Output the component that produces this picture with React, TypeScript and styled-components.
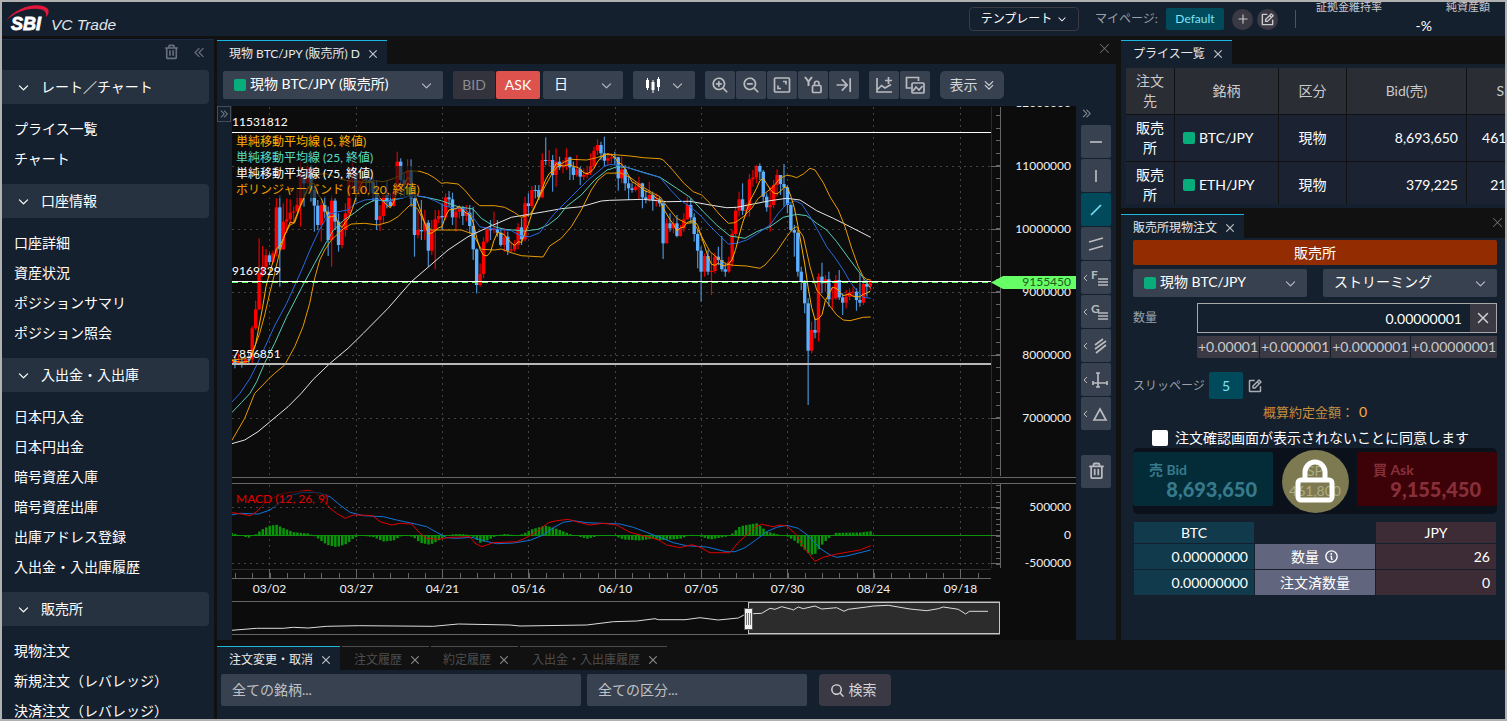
import React from "react";
import styled, { createGlobalStyle, css } from "styled-components";
import {
  PiTrashBold,
  PiCaretDoubleLeftBold,
  PiCaretDoubleRightBold,
  PiCaretDoubleDownBold,
  PiCaretDownBold,
  PiXBold,
  PiXLight,
  PiPlusBold,
  PiNotePencilBold,
  PiMagnifyingGlassPlusBold,
  PiMagnifyingGlassMinusBold,
  PiMagnifyingGlassBold,
  PiArrowLineRightBold,
  PiInfoBold,
} from "react-icons/pi";

const color = {
  navy: "#15202f",
  black: "#111111",
  chart: "#0c0c0c",
  control: "#38414f",
  brown: "#3a3944",
  teal: "#004a5c",
  tealText: "#7fe3f5",
  accent: "#1cb5e0",
  green: "#07ae7b",
  text: "#ffffff",
  soft: "#c9cacc",
  dim: "#9aa0a8",
};

const GlobalStyle = createGlobalStyle`
  * { box-sizing: border-box; }
  body {
    margin: 0;
    background: ${color.black};
    color: ${color.text};
    font-family: Lato, "Noto Sans CJK JP", sans-serif;
    font-size: 14px;
    line-height: 20px;
  }
  button, input, select { font: inherit; color: inherit; margin: 0; }
  button { border: 0; padding: 0; background: none; }
  svg { flex: none; }
`;

/* ---------- page frame ---------- */

const Frame = styled.div`
  display: flex;
  flex-direction: column;
  height: 100vh;
  border: 2px solid #b1b1b1;
  overflow: hidden;
`;

const Header = styled.header`
  display: flex;
  align-items: center;
  flex: none;
  height: 34px;
  background: ${color.navy};
  overflow: hidden;
`;

const Body = styled.div`
  display: flex;
  flex: 1;
  min-height: 0;
  gap: 3px;
  padding-top: 3px;
`;

const Workspace = styled.main`
  display: flex;
  flex-direction: column;
  flex: 1;
  min-width: 0;
  gap: 6px;
  padding-top: 1px;
`;

const UpperRow = styled.div`
  display: flex;
  flex: none;
  gap: 5px;
`;

/* ---------- header ---------- */

const HeaderTools = styled.div`
  display: flex;
  align-items: center;
  margin-left: auto;
`;

const TemplateButton = styled.button`
  display: flex;
  align-items: center;
  justify-content: center;
  gap: 5px;
  width: 110px;
  height: 24px;
  margin-right: 16px;
  border: 1px solid #3b3a42;
  border-radius: 4px;
  font-size: 12px;
`;

const HeaderLabel = styled.span`
  width: 71px;
  color: ${color.dim};
  font-size: 12px;
`;

const PageChip = styled.button`
  width: 58px;
  height: 22px;
  margin-right: 8px;
  border-radius: 2px;
  background: ${color.teal};
  color: ${color.tealText};
  font-size: 12px;
`;

const RoundButton = styled.button`
  display: grid;
  place-items: center;
  width: 21px;
  height: 21px;
  margin-right: 4px;
  border-radius: 50%;
  background: ${color.brown};
  color: ${color.soft};
`;

const Divider = styled.span`
  width: 1px;
  height: 18px;
  margin: 0 20px 0 13px;
  background: #4a5563;
`;

const Metric = styled.div<{ $width: number; $inset?: number }>`
  display: flex;
  flex-direction: column;
  width: ${(p) => p.$width}px;
  height: 40px;
  padding-left: ${(p) => p.$inset ?? 0}px;
  color: ${color.soft};
  font-size: 11px;
  line-height: 16px;
`;

const MetricValue = styled.span`
  align-self: flex-end;
  padding-top: 1px;
  color: ${color.text};
  font-size: 14px;
  line-height: 20px;
`;

/* ---------- sidebar ---------- */

const Sidebar = styled.nav`
  width: 212px;
  flex: none;
  background: ${color.navy};
  border-top: 1px solid #1c2a4a;
  overflow: hidden;
`;

const SidebarTools = styled.div`
  display: flex;
  justify-content: flex-end;
  align-items: center;
  gap: 13px;
  height: 30px;
  padding: 0 8px 6px 0;
  color: #69707b;
  button { display: flex; }
`;

const GroupHead = styled.button`
  display: flex;
  align-items: center;
  gap: 11px;
  width: 207px;
  height: 34px;
  padding-left: 15px;
  border-radius: 0 4px 4px 0;
  background: #263240;
`;

const GroupList = styled.ul`
  margin: 0;
  padding: 10px 12px;
  list-style: none;
`;

const GroupLink = styled.a`
  display: block;
  color: inherit;
  line-height: 30px;
  text-decoration: none;
  white-space: nowrap;
`;

/* ---------- panels and tabs ---------- */

const Panel = styled.section<{ $grow?: boolean }>`
  display: flex;
  flex-direction: column;
  min-width: 0;
  ${(p) => p.$grow && css`flex: 1;`}
`;

const RightColumn = styled.div`
  display: flex;
  flex-direction: column;
  flex: none;
  gap: 6px;
  width: 384px;
`;

const TabBar = styled.div`
  display: flex;
  flex: none;
  gap: 2px;
  height: 24px;
  background: ${color.black};
`;

const Tab = styled.div<{ $active?: boolean }>`
  display: flex;
  align-items: center;
  gap: 7px;
  padding: 2px 8px 0 12px;
  border-top: 1px solid ${(p) => (p.$active ? color.accent : "#4c4c4c")};
  background: ${(p) => (p.$active ? color.navy : "transparent")};
  color: ${(p) => (p.$active ? "#e8e8e8" : "#4e4e4e")};
  font-size: 12px;
  white-space: nowrap;
  button { display: flex; color: ${(p) => (p.$active ? "#c0c4c9" : "#8a8a8a")}; }
`;

const PanelClose = styled.button<{ $inset?: number }>`
  display: flex;
  align-items: flex-start;
  margin: 1px ${(p) => p.$inset ?? 4}px 0 auto;
  color: #7b7b7b;
`;

const NavyBody = styled.div<{ $pad: string }>`
  display: flex;
  flex-direction: column;
  flex: 1;
  padding: ${(p) => p.$pad};
  background: ${color.navy};
`;

/* ---------- controls ---------- */

const SelectBox = styled.label<{ $width: number }>`
  display: flex;
  align-items: center;
  width: ${(p) => p.$width}px;
  height: 28px;
  padding: 0 10px 0 11px;
  border-radius: 2px;
  background: ${color.control};
  select {
    flex: 1;
    min-width: 0;
    padding: 0 0 2px;
    border: 0;
    outline: 0;
    background: transparent;
    appearance: none;
  }
  svg { color: #b4b8be; }
`;

const Square = styled.i`
  flex: none;
  width: 12px;
  height: 12px;
  margin-right: 4px;
  border-radius: 2px;
  background: ${color.green};
`;

const Toolbar = styled.div`
  display: flex;
  gap: 10px;
  height: 42px;
  padding: 7px 6px;
  background: ${color.navy};
`;

const ButtonGroup = styled.div<{ $gap?: number }>`
  display: flex;
  gap: ${(p) => p.$gap ?? 1}px;
`;

const SideButton = styled.button<{ $ask?: boolean }>`
  width: ${(p) => (p.$ask ? 44 : 42)}px;
  height: 28px;
  border-radius: 2px;
  background: ${(p) => (p.$ask ? "#dd524c" : "#33333e")};
  color: ${(p) => (p.$ask ? "#fff" : "#8b8b92")};
`;

const ToolButton = styled.button<{ $width?: number }>`
  display: flex;
  align-items: center;
  justify-content: center;
  gap: 10px;
  width: ${(p) => p.$width ?? 30}px;
  height: 28px;
  border-radius: 2px;
  background: ${color.control};
  color: #b9bbbf;
`;

const ShowButton = styled(ToolButton)`
  gap: 5px;
  border-radius: 5px;
  color: #d4d5d8;
`;

const ChartArea = styled.div`
  display: flex;
  background: ${color.navy};
`;

const HandleColumn = styled.div`
  width: 15px;
  flex: none;
`;

const Handle = styled.button`
  display: grid;
  place-items: center;
  width: 14px;
  height: 16px;
  border: 1px solid #444c58;
  color: #7b828c;
`;

const ChartSvg = styled.svg`
  display: block;
  flex: 1;
  min-width: 0;
  height: 534px;
  background: ${color.chart};
  text {
    font-family: Lato, "Noto Sans CJK JP", sans-serif;
    font-size: 12px;
  }
`;

const DrawColumn = styled.div`
  display: flex;
  flex-direction: column;
  gap: 1px;
  flex: none;
  width: 40px;
  padding: 2px 5px 0;
`;

const DrawToggle = styled.button`
  display: flex;
  height: 16px;
  color: #8b9098;
`;

const DrawButton = styled.button<{ $active?: boolean; $apart?: boolean }>`
  display: grid;
  place-items: center;
  width: 30px;
  height: 33px;
  margin-top: ${(p) => (p.$apart ? 24 : 0)}px;
  border-radius: 2px;
  background: ${(p) => (p.$active ? color.teal : color.control)};
  color: ${(p) => (p.$active ? "#6fe0f5" : "#b9bbbf")};
`;

/* ---------- price list ---------- */

const PriceClip = styled.div`
  height: 136px;
  overflow: hidden;
`;

const PriceTable = styled.table`
  width: 417px;
  table-layout: fixed;
  border-collapse: separate;
  border-spacing: 0;
  th, td {
    height: 47px;
    padding: 0 8px;
    border: solid ${color.black};
    border-width: 0 1px 1px 0;
    line-height: 20px;
    font-weight: 400;
    text-align: center;
  }
  th { background: #2a2d34; color: ${color.soft}; }
  td { background: #1b2333; }
  td:nth-child(n + 4) { text-align: right; }
  td:nth-child(2) { text-align: left; }
`;

const Pair = styled.span`
  display: flex;
  align-items: center;
`;

/* ---------- order form ---------- */

const VenueButton = styled.button`
  height: 25px;
  margin-bottom: 4px;
  border-radius: 2px;
  background: #932c00;
`;

const Row = styled.div<{ $top?: number }>`
  display: flex;
  align-items: center;
  justify-content: space-between;
  margin-top: ${(p) => p.$top ?? 0}px;
`;

const FieldLabel = styled.label<{ $width: number }>`
  width: ${(p) => p.$width}px;
  color: ${color.dim};
  font-size: 12px;
`;

const AmountBox = styled.div`
  display: flex;
  width: 300px;
  height: 30px;
  border: 1px solid #a8a8a8;
  input {
    flex: 1;
    min-width: 0;
    padding: 2px 8px 0;
    border: 0;
    outline: 0;
    background: transparent;
    text-align: right;
  }
  button {
    display: grid;
    place-items: center;
    width: 26px;
    background: ${color.brown};
    color: #d0d0d4;
  }
`;

const StepRow = styled.div`
  display: flex;
  gap: 1px;
  margin: 3px 0 0 64px;
`;

const StepButton = styled.button`
  flex: 1 1 auto;
  height: 22px;
  background: ${color.brown};
  color: ${color.soft};
  border-radius: 1px;
`;

const SlipRow = styled.div`
  display: flex;
  align-items: center;
  margin-top: 14px;
  color: #a9adb3;
  button { display: flex; margin-left: 4px; }
`;

const SlipChip = styled.button`
  justify-content: center;
  align-items: center;
  width: 34px;
  height: 27px;
  border-radius: 2px;
  background: ${color.teal};
  color: ${color.tealText};
`;

const Estimate = styled.p`
  display: flex;
  justify-content: center;
  margin: 3px 0 0;
  color: #c48b3c;
  font-size: 13px;
  b { margin-left: 5px; color: #ffab40; font-weight: 400; font-size: 14px; }
`;

const Consent = styled.label`
  display: flex;
  align-items: center;
  gap: 7px;
  height: 20px;
  margin-top: 6px;
  padding-left: 19px;
  white-space: nowrap;
  input {
    width: 16px;
    height: 16px;
    margin: 0;
    border-radius: 2px;
    background: #fff;
    appearance: none;
  }
`;

const Deal = styled.div`
  display: flex;
  align-items: center;
  justify-content: space-between;
  height: 66px;
  padding-bottom: 4px;
  border-radius: 5px;
  background: #0a111b;
`;

const DealButton = styled.button<{ $ask?: boolean }>`
  display: flex;
  flex-direction: column;
  width: 140px;
  height: 54px;
  padding: 10px 16px 0;
  border-radius: 2px;
  background: ${(p) => (p.$ask ? "#3d0208" : "#032c38")};
  color: ${(p) => (p.$ask ? "#87303a" : "#367a8c")};
  font-weight: 700;
  line-height: 16px;
  span { align-self: flex-start; }
  b { align-self: flex-end; font-size: 20px; line-height: 22px; }
`;

const Spread = styled.div`
  display: grid;
  width: 67px;
  height: 63px;
  margin-top: 4px;
  place-items: center;
  border-radius: 50%;
  background: #7d7a51;
  color: #aeab83;
  > * { grid-area: 1 / 1; }
`;

const SpreadText = styled.span`
  display: flex;
  flex-direction: column;
  align-items: center;
`;

const Balance = styled.table`
  width: 100%;
  margin-top: 7px;
  table-layout: fixed;
  border-spacing: 1px;
  th, td { height: 25px; padding: 0 6px; text-align: right; font-weight: 400; line-height: 20px; }
  thead th, thead td { height: 21px; text-align: center; }
  th:first-child, td:first-child { background: #123a4d; }
  th:last-child, td:last-child { background: #3d2b36; }
  tbody th:nth-child(2) { background: #61657d; text-align: center; }
`;

const Inline = styled.span`
  display: flex;
  align-items: center;
  justify-content: center;
  gap: 5px;
`;

/* ---------- order search ---------- */

const SearchRow = styled.div`
  display: flex;
  gap: 6px;
`;

const SearchInput = styled.input<{ $width: number }>`
  width: ${(p) => p.$width}px;
  height: 32px;
  padding: 0 11px 2px;
  border: 0;
  border-radius: 2px;
  background: ${color.control};
  &::placeholder { color: #c0c1c4; opacity: 1; }
`;

const SearchButton = styled.button`
  display: flex;
  align-items: center;
  justify-content: center;
  gap: 4px;
  width: 72px;
  height: 32px;
  margin-left: 6px;
  padding-right: 4px;
  border-radius: 4px;
  background: ${color.brown};
  color: #d4d4d8;
`;

/* ---------- chart data ---------- */

// A curve is stored in segments; each has its own origin and uses three units to the pixel.
type Segment = { x: number; y: number; pts: string };

const toPoints = (segs: Segment[]) =>
  segs.flatMap((s) =>
    s.pts.split(" ").map((p) => {
      const [a, b] = p.split(",").map(Number);
      return [s.x + a / 3, s.y + b / 3] as const;
    })
  );

const toPath = (segs: Segment[]) =>
  toPoints(segs)
    .map(([x, y]) => `${x.toFixed(1)},${y.toFixed(1)}`)
    .join(" ");

const price = (early: string, late: string): Segment[] => [
  { x: 228, y: 130, pts: early },
  { x: 610, y: 100, pts: late },
];

const study = (early: string, late: string): Segment[] => [
  { x: 220, y: 475, pts: early },
  { x: 660, y: 400, pts: late },
];

const upperBand = price(
  "11,690 50,686 65,680 80,650 95,610 110,555 125,490 140,430 155,365 170,315 186,285 200,278 215,235 230,200 245,165 265,135 290,130 320,140 350,150 380,155 420,158 440,152 465,155 500,145 530,127 550,123 575,124 600,132 620,144 640,160 655,158 690,162 710,180 735,210 755,227 800,227 830,232 860,248 880,262 906,254 925,220 945,180 975,125 990,108 1010,95 1030,88 1076,90 1106,83 1136,73 1146,75",
  "0,163 60,168 100,173 150,176 160,180 190,212 220,248 250,275 275,285 300,310 330,345 355,370 375,368 400,350 425,325 445,295 465,280 490,260 510,235 530,226 545,228 560,233 580,222 600,205 615,210 640,248 660,290 685,330 705,380 725,445 745,500 760,530 770,538 782,540"
);
const lowerBand = price(
  "11,932 50,865 80,790 90,780 124,745 140,730 170,705 200,650 225,590 245,520 260,445 275,390 290,360 310,330 345,297 370,282 410,280 450,285 485,275 510,260 530,240 550,222 570,238 590,280 610,300 640,300 700,300 735,312 760,358 800,360 820,357 850,368 880,377 945,381 965,348 1000,325 1030,290 1060,240 1090,180 1110,150 1135,130 1145,129",
  "0,220 30,218 60,232 100,262 130,280 150,290 170,318 200,355 230,370 250,368 270,400 300,455 330,480 350,492 370,496 410,498 450,505 465,495 500,455 530,410 550,385 560,380 580,410 600,500 620,570 650,605 680,645 700,660 720,662 760,652 782,651"
);
const basis = price(
  "11,817 36,790 66,745 86,705 141,585 176,520 221,420 246,360 274,300 290,272 305,252 330,245 360,240 380,222 410,210 440,207 470,215 520,205 550,197 590,200 620,212 650,228 680,235 710,235 735,262 755,290 780,295 850,302 880,318 905,320 935,308 960,275 980,250 1030,200 1080,150 1110,125 1130,108 1145,104",
  "0,193 25,196 60,205 100,218 150,232 180,268 210,300 240,320 270,345 300,378 330,408 355,432 380,430 410,420 440,402 480,375 505,340 530,312 555,302 575,312 600,350 620,385 650,440 680,480 700,510 720,545 740,572 760,592 782,595"
);
const average25 = price(
  "11,848 40,818 66,790 86,755 111,697 140,640 176,560 220,475 260,400 290,345 315,302 345,272 380,248 410,225 440,210 480,212 520,205 550,195 600,203 640,212 690,230 735,237 760,265 800,290 830,298 890,303 930,298 960,285 990,262 1015,230 1060,195 1100,150 1140,118",
  "0,208 20,200 50,202 100,217 150,232 200,265 240,292 280,335 320,375 360,408 405,415 440,395 480,380 520,352 560,343 590,347 620,370 650,390 680,425 720,480 750,520 775,555 782,565"
);
const average75 = price(
  "11,941 50,930 90,905 124,877 180,830 220,790 256,748 306,700 360,655 406,610 480,535 550,455 600,412 660,360 720,320 780,292 850,262 950,245 1000,236 1060,230 1120,213 1145,211",
  "0,301 100,298 170,305 240,304 300,315 350,323 380,322 430,312 480,302 530,295 570,300 620,332 670,355 710,375 782,412"
);
const macdLine = study(
  "35,113 70,118 90,122 110,110 130,88 155,70 190,55 230,50 265,46 285,52 310,75 330,100 350,115 375,130 400,120 440,121 460,123 480,140 515,150 540,145 575,147 600,175 620,190 655,193 690,187 750,185 765,205 785,215 820,203 890,200 915,190 950,170 985,143 1010,137 1045,133 1080,143 1110,150 1150,145 1190,150 1230,172 1260,180 1300,190",
  "0,422 20,435 60,443 95,434 120,442 150,458 210,458 235,427 260,405 285,380 305,373 340,380 360,375 380,378 410,405 430,440 465,484 490,472 530,462 570,455 600,450 632,437"
);
const signalLine = study(
  "35,120 60,115 115,117 150,105 175,85 215,60 250,52 295,53 330,65 360,90 390,112 430,122 490,125 530,135 590,148 620,155 650,172 680,188 710,190 755,187 790,197 830,206 880,204 930,196 970,180 1000,158 1030,142 1060,137 1100,143 1200,147 1240,157 1280,172 1310,184",
  "0,412 40,428 80,437 140,441 200,455 225,455 255,443 290,418 320,395 350,382 380,376 415,385 445,407 480,445 510,465 530,472 560,468 600,458 632,450"
);
const overview = study(
  "35,466 110,460 190,460 220,457 265,459 320,454 415,452 640,454 715,447 870,450 900,453 1100,450 1180,440 1250,438 1305,431 1315,434",
  "0,659 75,659 120,653 175,660 235,654 250,646 265,643 280,641 305,640 330,625 345,628 365,620 395,628 400,630 415,621 430,626 465,618 485,627 530,623 552,634 565,628 620,621 640,618 685,616 750,627 800,632 835,626 850,621 895,628 917,642 928,634 984,634"
);

// Daily bars as close,high,low; a bar opens where the one before it closed.
const barsEarly =
  "690,650,700 700,680,715 695,670,705 703,685,713 688,675,706 688,670,700 595,588,700 538,512,600 430,325,540 410,348,440 376,357,415 396,370,405 370,362,400 232,205,380 358,195,470 275,220,360 268,205,310 248,208,285 245,230,280 225,180,240 130,95,290 160,120,230 110,95,170 180,105,215 227,170,305 285,210,300 225,215,335 245,200,265 330,230,378 212,195,410 275,205,300 345,250,365 300,275,355 250,220,320 150,120,260 135,90,170 185,110,215 150,120,200 140,115,190 150,110,180 155,120,190 190,140,215 270,150,300 258,225,303 195,190,280 215,150,235 228,190,230 185,170,230 95,65,190 150,85,200 165,130,200 120,88,190 205,88,230 315,180,380 300,240,325 304,210,330 278,240,330 362,270,410 300,270,375 268,240,418 258,240,280 262,220,300 202,190,270 208,183,230 262,188,285 245,235,305 232,225,265 258,228,285 248,225,275 288,225,310 358,230,390 465,355,490 432,400,470 335,322,445 298,290,340 300,270,330 297,245,310 308,270,320 345,295,350 320,295,365 362,305,375 358,340,370 345,330,365 292,280,358 328,265,345 220,200,335 228,190,260 180,168,235 180,165,205 202,165,210 90,70,205 92,22,105 90,60,110 135,75,185 95,55,170 112,80,120 108,90,130 82,55,120 112,80,150 135,95,150 118,75,140 140,110,165 135,115,150 128,110,145 108,70,135 62,50,115 45,28,75 70,35,90 92,20,110 85,70,105 82,70,100";
const barsLate =
  "172,155,195 235,170,272 208,170,250 250,195,272 265,230,300 270,250,278 260,245,275 250,230,300 292,248,325 298,270,310 285,245,305 300,275,332 298,280,320 310,290,320 430,305,477 370,355,430 385,340,395 370,355,400 408,345,412 385,375,410 358,340,395 315,290,360 352,295,370 402,340,425 452,390,505 515,440,605 468,460,530 515,450,525 513,460,585 470,458,520 480,440,495 508,408,515 515,490,530 485,470,518 402,390,500 332,320,410 298,275,350 332,250,345 330,310,350 238,222,350 232,210,260 198,195,250 215,190,240 290,210,305 322,280,335 315,260,395 255,240,325 225,208,290 252,225,285 262,192,320 315,255,340 390,310,395 398,375,470 515,390,530 545,500,570 610,540,640 752,595,915 690,665,760 698,655,715 530,520,725 550,488,580 538,525,575 598,515,620 595,560,630 540,525,600 592,510,600 608,580,645 590,570,625 578,565,600 575,560,590 600,565,632 608,520,620 552,530,615 560,540,590 545,540,570";

const readBars = (text: string, top: number) =>
  text.split(" ").map((b) => b.split(",").map((v) => top + Number(v) / 3));

const bars = [...readBars(barsEarly, 130), ...readBars(barsLate, 100)];
const barX = (i: number) => 231.5 + i * 3.453;

const average5 = bars
  .map((_, i) => {
    const part = bars.slice(Math.max(0, i - 4), i + 1);
    const mean = part.reduce((s, b) => s + b[0], 0) / part.length;
    return `${barX(i).toFixed(1)},${mean.toFixed(1)}`;
  })
  .join(" ");

const histogramKnots = toPoints(
  study(
    "35,8 60,0 85,-7 105,2 125,18 150,30 170,32 190,22 220,10 265,6 285,-3 320,-28 350,-35 380,-25 400,-8 420,0 460,-5 490,-18 520,-15 540,-3 560,0 580,-5 600,-22 630,-28 655,-15 680,0 700,4 730,4 755,0 780,-22 800,-15 830,0 855,5 890,0 910,5 930,17 975,30 1010,20 1050,4 1065,0 1100,-10 1140,0 1180,0 1210,-12 1260,-15 1300,-9",
    "0,-14 60,-10 95,3 120,-3 150,-12 200,-3 215,5 240,28 290,37 320,12 350,4 380,-2 410,-20 450,-58 465,-55 490,-22 515,0 525,8 600,9 632,13"
  )
).map(([x, y]) => [x, x < 658 ? y - 475 : y - 400]);

const histogramAt = (x: number) => {
  const j = histogramKnots.findIndex((k) => k[0] >= x);
  if (j <= 0) return histogramKnots[j === 0 ? 0 : histogramKnots.length - 1][1];
  const [x0, y0] = histogramKnots[j - 1];
  const [x1, y1] = histogramKnots[j];
  return y0 + ((y1 - y0) * (x - x0)) / (x1 - x0);
};

const dates: [number, string][] = [
  [269.5, "03/02"],
  [356.5, "03/27"],
  [442.5, "04/21"],
  [528.5, "05/16"],
  [615.5, "06/10"],
  [701.5, "07/05"],
  [787.5, "07/30"],
  [873.5, "08/24"],
  [960.5, "09/18"],
];

const priceMarks: [number, string][] = [
  [103.5, "12000000"],
  [166.5, "11000000"],
  [229.5, "10000000"],
  [292.5, "9000000"],
  [355.5, "8000000"],
  [418.5, "7000000"],
];

const macdMarks: [number, string][] = [
  [507.5, "500000"],
  [535.5, "0"],
  [563.5, "-500000"],
];

const legend = [
  { y: 142, width: 130, fill: "#ffb000", text: "単純移動平均線 (5, 終値)" },
  { y: 158, width: 137, fill: "#57dcc4", text: "単純移動平均線 (25, 終値)" },
  { y: 174, width: 182, fill: "#ffffff", text: "単純移動平均線 (75, 終値)" },
  { y: 190, width: 182, fill: "#f09c00", text: "ボリンジャーバンド (1.0, 20, 終値)" },
];

const range = (from: number, to: number, step: number) => {
  const out: number[] = [];
  for (let v = from; v <= to; v += step) out.push(v);
  return out;
};

const Line = ({ points, stroke, width = 1 }: { points: string; stroke: string; width?: number }) => (
  <polyline points={points} fill="none" stroke={stroke} strokeWidth={width} strokeLinejoin="round" />
);

const Chart = () => (
  <ChartSvg viewBox="232 106 844 534" preserveAspectRatio="xMinYMin meet" role="img" aria-label="BTC/JPY">
    <g stroke="#444" strokeDasharray="2 4">
      {dates.map(([x]) => (
        <path key={x} d={`M${x} 107V476M${x} 485V568`} />
      ))}
      {priceMarks.slice(1).map(([y]) => (
        <path key={y} d={`M232 ${y}H991`} />
      ))}
      <path d="M232 507.5H991M232 563.5H991" />
    </g>

    {bars.map(([close, high, low], i) => {
      const open = i ? bars[i - 1][0] : close + 3;
      const up = close < open;
      const x = barX(i);
      return (
        <g key={i}>
          <rect x={x - 0.6} y={high} width={1.2} height={low - high} fill={up ? "#e00000" : "#4a90d0"} />
          <rect
            x={x - 1.7}
            y={Math.min(open, close)}
            width={3.4}
            height={Math.max(1, Math.abs(open - close))}
            fill={up ? "#ff0000" : "#5cb0ff"}
          />
        </g>
      );
    })}

    <Line points={toPath(average75)} stroke="#e6e6e6" />
    <Line points={toPath(average25)} stroke="#57cdb4" />
    <Line points={toPath(basis)} stroke="#2a68e0" />
    <Line points={toPath(upperBand)} stroke="#e89a00" />
    <Line points={toPath(lowerBand)} stroke="#e89a00" />
    <Line points={average5} stroke="#ffb000" />

    <path d="M232 132.5H991M232 281.5H991" stroke="#fff" />
    <path d="M232 282.5H991" stroke="#66ff66" strokeDasharray="6 4" />
    <path d="M232 364H991" stroke="#b8b8b8" strokeWidth="2" />

    {legend.map((l) => (
      <g key={l.y}>
        <rect x={236} y={l.y - 8} width={l.width} height={16} fill={color.chart} fillOpacity={0.65} />
        <text x={236} y={l.y + 4} fill={l.fill}>{l.text}</text>
      </g>
    ))}
    <g fill="#fff">
      <text x={232} y={126}>11531812</text>
      <text x={232} y={275}>9169329</text>
      <text x={232} y={358}>7856851</text>
    </g>

    {bars.map((_, i) => {
      const x = barX(i);
      const h = histogramAt(x);
      return (
        <rect key={i} x={x - 1} y={535.5 - Math.max(h, 0)} width={2.5} height={Math.abs(h)} fill="#0a940a" />
      );
    })}
    <path d="M232 535.5H991" stroke="#0a940a" />
    <Line points={toPath(signalLine)} stroke="#0f74d8" />
    <Line points={toPath(macdLine)} stroke="#e00000" />
    <rect x={236} y={491} width={92} height={16} fill={color.chart} fillOpacity={0.6} />
    <text x={236} y={503} fill="#e00000">MACD (12, 26, 9)</text>

    <g stroke="#666">
      <path d="M232 477.5H1076M232 483.5H1076" />
      <path d="M1000.5 107V476M1000.5 484V568" />
      <path d="M232 578.5H991M232 601.5H1000M232 634.5H1000" />
      <path d="M991.5 107V568M232 569.5H991" stroke="#2b2b2b" />
      {range(115.9, 475, 12.6).map((y) => (
        <path key={y} d={`M996 ${Math.round(y) - 0.5}H1000`} />
      ))}
      {range(485.1, 567, 5.6).map((y) => (
        <path key={y} d={`M996 ${Math.round(y) + 0.5}H1000`} />
      ))}
      {[...priceMarks.slice(1), ...macdMarks].map(([y]) => (
        <path key={y} d={`M991 ${y}H1000`} />
      ))}
      {range(235, 980, 17.27).map((x) => (
        <path key={x} d={`M${Math.round(x) + 0.5} 573V578`} />
      ))}
      {dates.map(([x]) => (
        <path key={x} d={`M${x} 569V578`} />
      ))}
    </g>

    <g fill="#f0f0f0" textAnchor="end">
      {[...priceMarks, ...macdMarks].map(([y, t]) => (
        <text key={t} x={1071} y={y + 3}>{t}</text>
      ))}
    </g>
    <g fill="#f0f0f0" textAnchor="middle">
      {dates.map(([x, t]) => (
        <text key={t} x={x} y={593}>{t}</text>
      ))}
    </g>
    <polygon points="991,282.5 1003,276 1076,276 1076,289 1003,289" fill="#66ff66" />
    <text x={1071} y={286} fill="#1f5a1f" textAnchor="end">9155450</text>

    <rect x={748.5} y={602.5} width={251} height={31} fill="#2c2c2c" stroke="#c4c4c4" />
    <Line points={toPath(overview)} stroke="#dcdcdc" />
    <rect x={744.5} y={608.5} width={8} height={21} fill="#f2f2f2" stroke="#555" />
    <path d="M746.5 613V625M748.5 613V625M750.5 613V625" stroke="#777" />
  </ChartSvg>
);

/* ---------- icons drawn for this terminal ---------- */

const Glyph = ({ size = 20, children }: { size?: number; children: React.ReactNode }) => (
  <svg width={size} height={size} viewBox="0 0 20 20" fill="none" stroke="currentColor" strokeWidth="1.7">
    {children}
  </svg>
);

const CandleGlyph = () => (
  <svg width="16" height="18" viewBox="0 0 16 18" stroke="#fff" strokeWidth="3">
    <path d="M2.5 4V12M8 6V14M13.5 3V11" />
    <path d="M2.5 2V14M8 4V17M13.5 1V15" strokeWidth="1" />
  </svg>
);

const FitGlyph = () => (
  <Glyph>
    <rect x="2.5" y="3" width="15" height="14" rx="1" />
    <path d="M11 6.500H14V9.500M9 13.500H6V10.500" />
  </Glyph>
);

const YLockGlyph = () => (
  <Glyph>
    <path d="M2 2L5.500 6.500L9 2M5.500 6.500V11" strokeWidth="2" />
    <rect x="9.500" y="10.500" width="8.500" height="7" rx="1" />
    <path d="M11.500 10.500V8.500a2.250 2.250 0 0 1 4.500 0V10.500" />
  </Glyph>
);

const AddIndicatorGlyph = () => (
  <Glyph>
    <path d="M3 3V17H18M3.500 14.500L7.500 10.500L11 13L17 9.500M11 5.500H18M14.500 2V9" />
  </Glyph>
);

const OverlayGlyph = () => (
  <Glyph>
    <path d="M6 13H1.500V2.500H13.500V6" />
    <rect x="7" y="8" width="12" height="10" rx="1" />
    <path d="M8 16L11 12L14 15L17.500 11" />
  </Glyph>
);

const BranchGlyph = ({ children }: { children: React.ReactNode }) => (
  <svg width="28" height="24" viewBox="0 0 28 24" fill="none" stroke="currentColor" strokeWidth="1.700">
    <path d="M5 9L2 12L5 15" strokeWidth="1" />
    {children}
  </svg>
);

const MarkedLines = ({ mark }: { mark: "F" | "G" }) => (
  <BranchGlyph>
    <text x="9" y="13" fill="currentColor" stroke="none" fontSize="12" fontWeight="700">{mark}</text>
    <path d="M16 13H26M16 16H26M16 19H26" />
  </BranchGlyph>
);

const BigLock = () => (
  <svg width="40" height="44" viewBox="0 0 40 44" fill="none" stroke="#fff" strokeWidth="5">
    <path d="M10 21V13a10 10 0 0 1 20 0V21" />
    <rect x="3" y="21" width="34" height="20" rx="3" />
  </svg>
);

const drawTools: { label: string; icon: React.ReactNode; active?: boolean }[] = [
  { label: "水平線", icon: <Glyph><path d="M4 10H16" /></Glyph> },
  { label: "垂直線", icon: <Glyph><path d="M10 4V16" /></Glyph> },
  { label: "トレンドライン", icon: <Glyph><path d="M5 15L15 5" /></Glyph>, active: true },
  { label: "チャネル", icon: <Glyph><path d="M3 8L17 4M3 16L17 12" /></Glyph> },
  { label: "フィボナッチ", icon: <MarkedLines mark="F" /> },
  { label: "ギャン", icon: <MarkedLines mark="G" /> },
  { label: "平行線", icon: <BranchGlyph><path d="M13 11L21 5M13 15L24 7M14 19L24 11" /></BranchGlyph> },
  { label: "計測", icon: <BranchGlyph><path d="M16 5V19M14 5H18M14 19H18M11 15H25M11 13V17M25 13V17" /></BranchGlyph> },
  { label: "図形", icon: <BranchGlyph><path d="M18 7L24 18H12Z" /></BranchGlyph> },
];

const Logo = () => (
  <svg width="120" height="34" viewBox="2 2 120 34" role="img" aria-label="SBI VC Trade">
    <path d="M6 21C14 9 32 3 43 6C50 8 50 13 46 17C47 12 44 9 38 9C26 8 14 13 6 21Z" fill="#e5163c" />
    <g fill="#fff" fontFamily='"Liberation Sans", Arial, sans-serif' fontStyle="italic">
      <text x="11" y="30" fontSize="18" fontWeight="700" stroke="#fff" strokeWidth="0.800">SBI</text>
      <text x="51" y="30" fontSize="15.500" fill="#e2e4e8">VC Trade</text>
    </g>
  </svg>
);

/* ---------- content ---------- */

const menu = [
  { title: "レート／チャート", items: ["プライス一覧", "チャート"] },
  { title: "口座情報", items: ["口座詳細", "資産状況", "ポジションサマリ", "ポジション照会"] },
  {
    title: "入出金・入出庫",
    items: ["日本円入金", "日本円出金", "暗号資産入庫", "暗号資産出庫", "出庫アドレス登録", "入出金・入出庫履歴"],
  },
  { title: "販売所", items: ["現物注文", "新規注文（レバレッジ）", "決済注文（レバレッジ）"] },
];

const prices = [
  { pair: "BTC/JPY", bid: "8,693,650", spread: "461,800" },
  { pair: "ETH/JPY", bid: "379,225", spread: "21,800" },
];

const PanelTab = ({ children, active }: { children: string; active?: boolean }) => (
  <Tab $active={active}>
    <span>{children}</span>
    <button aria-label={`${children}を閉じる`}><PiXBold size={12} /></button>
  </Tab>
);

const Select = ({ width, value, square }: { width: number; value: string; square?: boolean }) => (
  <SelectBox $width={width}>
    {square && <Square />}
    <select aria-label={value} defaultValue={value}>
      <option>{value}</option>
    </select>
    <PiCaretDownBold size={13} />
  </SelectBox>
);

export default function App() {
  return (
    <Frame>
      <GlobalStyle />
      <Header>
        <Logo />
        <HeaderTools>
          <TemplateButton>テンプレート<PiCaretDownBold size={10} /></TemplateButton>
          <HeaderLabel>マイページ:</HeaderLabel>
          <PageChip>Default</PageChip>
          <RoundButton aria-label="追加"><PiPlusBold size={12} /></RoundButton>
          <RoundButton aria-label="編集"><PiNotePencilBold size={15} /></RoundButton>
          <Divider />
          <Metric $width={116}>
            証拠金維持率
            <MetricValue>-%</MetricValue>
          </Metric>
          <Metric $width={73} $inset={14}>純資産額</Metric>
        </HeaderTools>
      </Header>

      <Body>
        <Sidebar>
          <SidebarTools>
            <button aria-label="削除"><PiTrashBold size={17} /></button>
            <button aria-label="たたむ"><PiCaretDoubleLeftBold size={13} /></button>
          </SidebarTools>
          {menu.map((g) => (
            <div key={g.title}>
              <GroupHead><PiCaretDownBold size={13} />{g.title}</GroupHead>
              <GroupList>
                {g.items.map((t) => (
                  <li key={t}><GroupLink href="#">{t}</GroupLink></li>
                ))}
              </GroupList>
            </div>
          ))}
        </Sidebar>

        <Workspace>
          <UpperRow>
            <Panel $grow>
              <TabBar>
                <PanelTab active>現物 BTC/JPY (販売所) D</PanelTab>
                <PanelClose aria-label="閉じる"><PiXLight size={15} /></PanelClose>
              </TabBar>
              <Toolbar>
                <Select width={220} value="現物 BTC/JPY (販売所)" square />
                <ButtonGroup $gap={3}>
                  <ButtonGroup>
                    <SideButton>BID</SideButton>
                    <SideButton $ask>ASK</SideButton>
                  </ButtonGroup>
                  <Select width={80} value="日" />
                </ButtonGroup>
                <ToolButton $width={62} aria-label="チャート種別">
                  <CandleGlyph />
                  <PiCaretDownBold size={13} />
                </ToolButton>
                <ButtonGroup>
                  <ToolButton aria-label="拡大"><PiMagnifyingGlassPlusBold size={18} /></ToolButton>
                  <ToolButton aria-label="縮小"><PiMagnifyingGlassMinusBold size={18} /></ToolButton>
                  <ToolButton aria-label="全体表示"><FitGlyph /></ToolButton>
                  <ToolButton aria-label="Y軸固定"><YLockGlyph /></ToolButton>
                  <ToolButton aria-label="最新へ"><PiArrowLineRightBold size={18} /></ToolButton>
                </ButtonGroup>
                <ButtonGroup>
                  <ToolButton aria-label="指標追加"><AddIndicatorGlyph /></ToolButton>
                  <ToolButton aria-label="比較"><OverlayGlyph /></ToolButton>
                </ButtonGroup>
                <ShowButton $width={64}>表示<PiCaretDoubleDownBold size={12} /></ShowButton>
              </Toolbar>
              <ChartArea>
                <HandleColumn>
                  <Handle aria-label="開く"><PiCaretDoubleRightBold size={10} /></Handle>
                </HandleColumn>
                <Chart />
                <DrawColumn>
                  <DrawToggle aria-label="たたむ"><PiCaretDoubleRightBold size={11} /></DrawToggle>
                  {drawTools.map((t) => (
                    <DrawButton key={t.label} aria-label={t.label} $active={t.active}>{t.icon}</DrawButton>
                  ))}
                  <DrawButton aria-label="削除" $apart><PiTrashBold size={19} /></DrawButton>
                </DrawColumn>
              </ChartArea>
            </Panel>

            <RightColumn>
              <Panel>
                <TabBar><PanelTab active>プライス一覧</PanelTab></TabBar>
                <NavyBody $pad="4px 0 4px 5px">
                  <PriceClip>
                    <PriceTable>
                      <colgroup>
                        <col width="49" /><col width="104" /><col width="68" /><col width="120" /><col width="76" />
                      </colgroup>
                      <thead>
                        <tr><th>注文先</th><th>銘柄</th><th>区分</th><th>Bid(売)</th><th>SP</th></tr>
                      </thead>
                      <tbody>
                        {prices.map((p) => (
                          <tr key={p.pair}>
                            <td>販売所</td>
                            <td><Pair><Square />{p.pair}</Pair></td>
                            <td>現物</td>
                            <td>{p.bid}</td>
                            <td>{p.spread}</td>
                          </tr>
                        ))}
                      </tbody>
                    </PriceTable>
                  </PriceClip>
                </NavyBody>
              </Panel>

              <Panel $grow>
                <TabBar>
                  <PanelTab active>販売所現物注文</PanelTab>
                  <PanelClose aria-label="閉じる" $inset={0}><PiXLight size={15} /></PanelClose>
                </TabBar>
                <NavyBody $pad="2px 8px 0 12px">
                  <VenueButton>販売所</VenueButton>
                  <Row>
                    <Select width={174} value="現物 BTC/JPY" square />
                    <Select width={174} value="ストリーミング" />
                  </Row>
                  <Row $top={6}>
                    <FieldLabel $width={64} htmlFor="amount">数量</FieldLabel>
                    <AmountBox>
                      <input id="amount" defaultValue="0.00000001" />
                      <button aria-label="消去"><PiXBold size={16} /></button>
                    </AmountBox>
                  </Row>
                  <StepRow>
                    {["+0.00001", "+0.000001", "+0.0000001", "+0.00000001"].map((s) => (
                      <StepButton key={s}>{s}</StepButton>
                    ))}
                  </StepRow>
                  <SlipRow>
                    <FieldLabel as="span" $width={72}>スリッページ</FieldLabel>
                    <SlipChip>5</SlipChip>
                    <button aria-label="編集"><PiNotePencilBold size={16} /></button>
                  </SlipRow>
                  <Estimate>概算約定金額：<b>0</b></Estimate>
                  <Consent>
                    <input type="checkbox" />
                    注文確認画面が表示されないことに同意します
                  </Consent>
                  <Deal>
                    <DealButton><span>売 Bid</span><b>8,693,650</b></DealButton>
                    <Spread>
                      <SpreadText><span>SP</span><span>461,800</span></SpreadText>
                      <BigLock />
                    </Spread>
                    <DealButton $ask><span>買 Ask</span><b>9,155,450</b></DealButton>
                  </Deal>
                  <Balance>
                    <thead><tr><th>BTC</th><td /><th>JPY</th></tr></thead>
                    <tbody>
                      <tr><td>0.00000000</td><th><Inline>数量<PiInfoBold size={15} /></Inline></th><td>26</td></tr>
                      <tr><td>0.00000000</td><th>注文済数量</th><td>0</td></tr>
                    </tbody>
                  </Balance>
                </NavyBody>
              </Panel>
            </RightColumn>
          </UpperRow>

          <Panel $grow>
            <TabBar>
              <PanelTab active>注文変更・取消</PanelTab>
              <PanelTab>注文履歴</PanelTab>
              <PanelTab>約定履歴</PanelTab>
              <PanelTab>入出金・入出庫履歴</PanelTab>
            </TabBar>
            <NavyBody $pad="4px">
              <SearchRow>
                <SearchInput $width={360} aria-label="銘柄" placeholder="全ての銘柄..." />
                <SearchInput $width={220} aria-label="区分" placeholder="全ての区分..." />
                <SearchButton><PiMagnifyingGlassBold size={15} />検索</SearchButton>
              </SearchRow>
            </NavyBody>
          </Panel>
        </Workspace>
      </Body>
    </Frame>
  );
}
